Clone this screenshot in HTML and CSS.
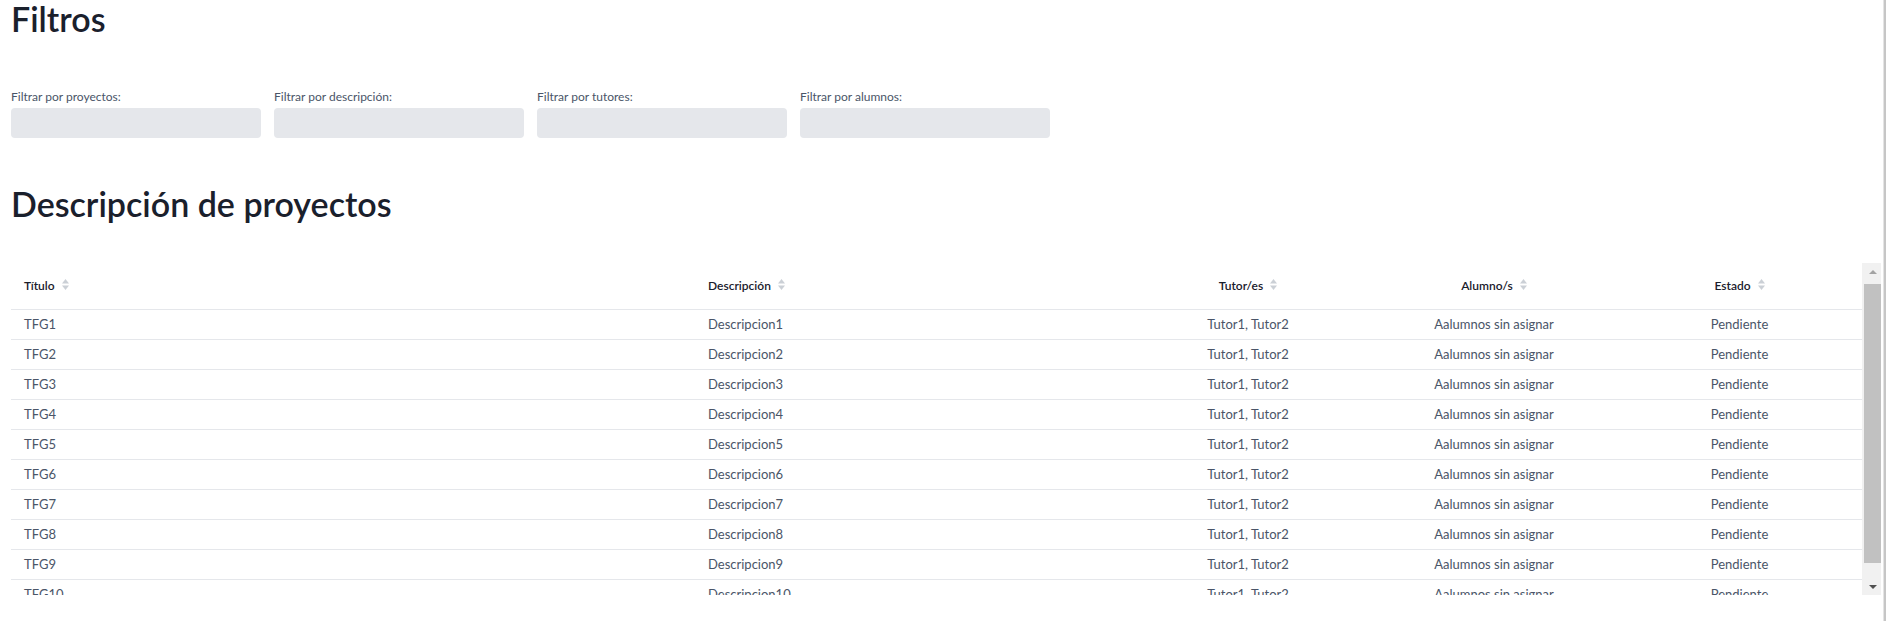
FILE: index.html
```html
<!DOCTYPE html>
<html lang="es">
<head>
<meta charset="utf-8">
<title>Proyectos</title>
<link rel="stylesheet" href="styles.css">
</head>
<body>
<div class="page">
  <h1 class="title">Filtros</h1>
  <div class="filters">
    <div class="filter">
      <label class="filter-label">Filtrar por proyectos:</label>
      <input class="filter-input" type="text">
    </div>
    <div class="filter">
      <label class="filter-label">Filtrar por descripción:</label>
      <input class="filter-input" type="text">
    </div>
    <div class="filter">
      <label class="filter-label">Filtrar por tutores:</label>
      <input class="filter-input" type="text">
    </div>
    <div class="filter">
      <label class="filter-label">Filtrar por alumnos:</label>
      <input class="filter-input" type="text">
    </div>
  </div>

  <h2 class="title section-title">Descripción de proyectos</h2>

  <div class="table-wrap">
    <div class="table-viewport">
      <table class="projects">
        <colgroup>
          <col class="col-title">
          <col class="col-desc">
          <col class="col-tutor">
          <col class="col-alumno">
          <col class="col-estado">
        </colgroup>
        <thead>
          <tr>
            <th class="left">Título<svg class="sort" viewBox="0 0 7 11" width="7" height="11"><polygon points="0,4.6 3.5,0 7,4.6"/><polygon points="0,6.4 7,6.4 3.5,11"/></svg></th>
            <th class="left">Descripción<svg class="sort" viewBox="0 0 7 11" width="7" height="11"><polygon points="0,4.6 3.5,0 7,4.6"/><polygon points="0,6.4 7,6.4 3.5,11"/></svg></th>
            <th class="center">Tutor/es<svg class="sort" viewBox="0 0 7 11" width="7" height="11"><polygon points="0,4.6 3.5,0 7,4.6"/><polygon points="0,6.4 7,6.4 3.5,11"/></svg></th>
            <th class="center">Alumno/s<svg class="sort" viewBox="0 0 7 11" width="7" height="11"><polygon points="0,4.6 3.5,0 7,4.6"/><polygon points="0,6.4 7,6.4 3.5,11"/></svg></th>
            <th class="center">Estado<svg class="sort" viewBox="0 0 7 11" width="7" height="11"><polygon points="0,4.6 3.5,0 7,4.6"/><polygon points="0,6.4 7,6.4 3.5,11"/></svg></th>
          </tr>
        </thead>
        <tbody>
          <tr><td class="left">TFG1</td><td class="left">Descripcion1</td><td class="center">Tutor1, Tutor2</td><td class="center">Aalumnos sin asignar</td><td class="center">Pendiente</td></tr>
          <tr><td class="left">TFG2</td><td class="left">Descripcion2</td><td class="center">Tutor1, Tutor2</td><td class="center">Aalumnos sin asignar</td><td class="center">Pendiente</td></tr>
          <tr><td class="left">TFG3</td><td class="left">Descripcion3</td><td class="center">Tutor1, Tutor2</td><td class="center">Aalumnos sin asignar</td><td class="center">Pendiente</td></tr>
          <tr><td class="left">TFG4</td><td class="left">Descripcion4</td><td class="center">Tutor1, Tutor2</td><td class="center">Aalumnos sin asignar</td><td class="center">Pendiente</td></tr>
          <tr><td class="left">TFG5</td><td class="left">Descripcion5</td><td class="center">Tutor1, Tutor2</td><td class="center">Aalumnos sin asignar</td><td class="center">Pendiente</td></tr>
          <tr><td class="left">TFG6</td><td class="left">Descripcion6</td><td class="center">Tutor1, Tutor2</td><td class="center">Aalumnos sin asignar</td><td class="center">Pendiente</td></tr>
          <tr><td class="left">TFG7</td><td class="left">Descripcion7</td><td class="center">Tutor1, Tutor2</td><td class="center">Aalumnos sin asignar</td><td class="center">Pendiente</td></tr>
          <tr><td class="left">TFG8</td><td class="left">Descripcion8</td><td class="center">Tutor1, Tutor2</td><td class="center">Aalumnos sin asignar</td><td class="center">Pendiente</td></tr>
          <tr><td class="left">TFG9</td><td class="left">Descripcion9</td><td class="center">Tutor1, Tutor2</td><td class="center">Aalumnos sin asignar</td><td class="center">Pendiente</td></tr>
          <tr><td class="left">TFG10</td><td class="left">Descripcion10</td><td class="center">Tutor1, Tutor2</td><td class="center">Aalumnos sin asignar</td><td class="center">Pendiente</td></tr>
        </tbody>
      </table>
    </div>
    <div class="scrollbar">
      <div class="sb-btn"><span class="arrow-up"></span></div>
      <div class="sb-track"><div class="sb-thumb"></div></div>
      <div class="sb-btn"><span class="arrow-down"></span></div>
    </div>
  </div>
</div>
<div class="page-edge"></div>
</body>
</html>
```

FILE: styles.css
```css
html, body {
  margin: 0;
  padding: 0;
  background: #ffffff;
}

body {
  font-family: Lato, "Noto Sans", "Open Sans", sans-serif;
  color: #1a202c;
}

.page {
  padding: 1px 6px 0 11px;
}

.title {
  margin: 0;
  font-size: 34px;
  line-height: 36px;
  font-weight: 600;
  color: #1a202c;
}

.filters {
  display: flex;
  gap: 13px;
  margin-top: 52px;
}

.filter {
  width: 250px;
  display: flex;
  flex-direction: column;
}

.filter-label {
  font-size: 12px;
  line-height: 16px;
  color: #4a5568;
  margin-bottom: 3px;
}

.filter-input {
  height: 30px;
  width: 100%;
  box-sizing: border-box;
  border: 0;
  border-radius: 4px;
  background: #e5e7eb;
  padding: 0 10px;
  margin: 0;
  font: inherit;
}

.section-title {
  margin-top: 48px;
}

.table-wrap {
  display: flex;
  margin-top: 41px;
  height: 332px;
}

.table-viewport {
  width: 1851px;
  overflow: hidden;
}

.projects {
  width: 1851px;
  table-layout: fixed;
  border-collapse: collapse;
}

.col-title { width: 684px; }
.col-desc { width: 430px; }
.col-tutor { width: 246px; }
.col-alumno { width: 246px; }
.col-estado { width: 245px; }

.projects th {
  padding: 15px 13px;
  font-size: 12px;
  line-height: 16px;
  font-weight: 600;
  color: #1a202c;
  border-bottom: 1px solid #e5e7eb;
  white-space: nowrap;
}

.projects td {
  padding: 6px 13px;
  font-size: 13px;
  line-height: 17px;
  color: #4a5568;
  border-bottom: 1px solid #e5e7eb;
  white-space: nowrap;
}

.left { text-align: left; }
.center { text-align: center; }

.sort {
  margin-left: 7px;
  fill: #cbd0d6;
}

.scrollbar {
  width: 19px;
  background: #f1f1f1;
  display: flex;
  flex-direction: column;
}

.sb-btn {
  height: 17px;
  padding-left: 2px;
  display: flex;
  align-items: center;
  justify-content: center;
}

.arrow-up {
  width: 0;
  height: 0;
  border-left: 4px solid transparent;
  border-right: 4px solid transparent;
  border-bottom: 4px solid #a3a3a3;
}

.arrow-down {
  width: 0;
  height: 0;
  border-left: 4px solid transparent;
  border-right: 4px solid transparent;
  border-top: 4px solid #505050;
}

.sb-track {
  flex: 1;
  padding: 4px 0 15px 2px;
  display: flex;
  flex-direction: column;
}

.sb-thumb {
  flex: 1;
  background: #c1c1c1;
}

.page-edge {
  position: fixed;
  top: 0;
  right: 1px;
  width: 2px;
  height: 100%;
  background: #c6c6c6;
  border-left: 1px solid #e4e4e4;
}
```
